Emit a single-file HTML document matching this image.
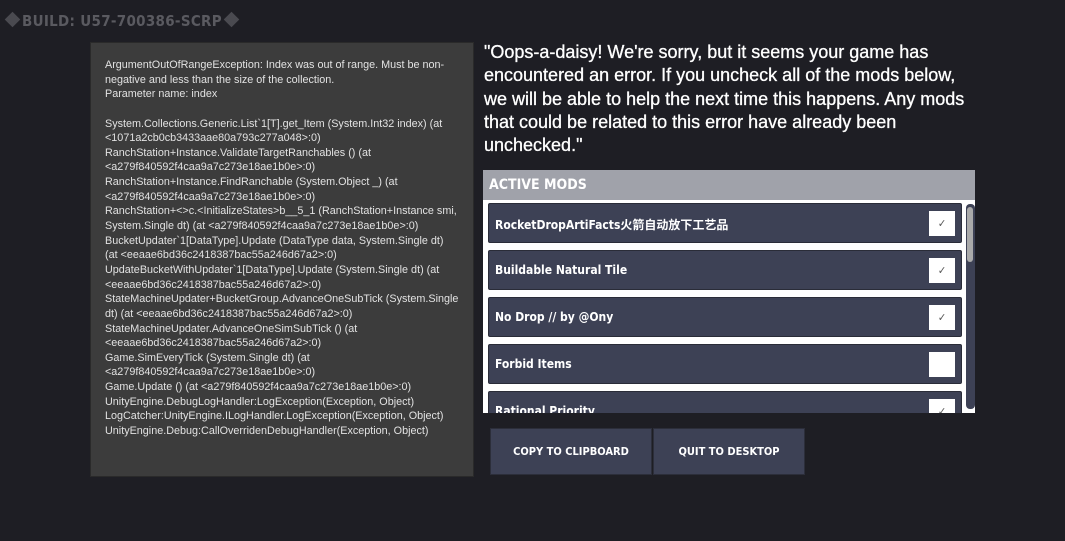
<!DOCTYPE html>
<html><head><meta charset="utf-8"><style>
*{margin:0;padding:0;box-sizing:border-box}
body{width:1065px;height:541px;background:#1e1e24;position:relative;overflow:hidden;font-family:"Liberation Sans","Noto Sans CJK SC",sans-serif}
.build{position:absolute;left:3px;top:12px;font-family:"DejaVu Sans Condensed","Liberation Sans",sans-serif;font-weight:bold;font-size:15px;color:#5a5a60;letter-spacing:0.3px}
.dia{display:inline-block;width:11px;height:11px;background:#4a4a50;transform:rotate(45deg);margin:0 4px;vertical-align:1px}
.log{position:absolute;left:90px;top:42px;width:384px;height:435px;background:#3c3c3c;border:1px solid #2a2a2a}
.log pre{position:absolute;left:14px;top:15px;font-family:"Liberation Sans",sans-serif;font-size:10.8px;line-height:14.64px;color:#e2e2e2;white-space:pre}
.msg{position:absolute;left:484px;top:41px;width:560px;font-size:18px;line-height:23.3px;color:#fff;-webkit-text-stroke:0.3px #fff;white-space:nowrap}
.mods{position:absolute;left:483px;top:170px;width:492px;height:243px;background:#fff;overflow:hidden}
.hdr{height:30px;background:#a0a2aa;color:#fff;font-family:"DejaVu Sans Condensed",sans-serif;font-weight:bold;font-size:14px;padding:7px 0 0 6px}
.row{position:absolute;left:5px;width:474px;height:40px;background:#3d4155;border:1px solid #2a2c38;border-radius:2px;color:#fff;font-family:"DejaVu Sans Condensed","Noto Sans CJK SC",sans-serif;font-weight:bold;font-size:12px;padding:12px 0 0 6px}
.cb{position:absolute;right:6px;top:7px;width:26px;height:25px;background:#fff;color:#555;font-size:11px;text-align:center;line-height:25px;font-weight:normal}
.sb{position:absolute;left:483px;top:34px;width:9px;height:205px;background:#3d4155;border-radius:4px}
.sb i{position:absolute;left:1px;top:3px;width:6px;height:55px;background:#aaa;border-radius:3px}
.btn{position:absolute;top:428px;height:47px;background:#3d4155;border:1px solid #2c2e3a;color:#fff;font-family:"DejaVu Sans Condensed",sans-serif;font-weight:bold;font-size:11px;text-align:center;line-height:46px}
</style></head><body>
<div class="build"><span class="dia"></span>BUILD: U57-700386-SCRP<span class="dia"></span></div>
<div class="log"><pre>ArgumentOutOfRangeException: Index was out of range. Must be non-
negative and less than the size of the collection.
Parameter name: index

System.Collections.Generic.List`1[T].get_Item (System.Int32 index) (at
&lt;1071a2cb0cb3433aae80a793c277a048&gt;:0)
RanchStation+Instance.ValidateTargetRanchables () (at
&lt;a279f840592f4caa9a7c273e18ae1b0e&gt;:0)
RanchStation+Instance.FindRanchable (System.Object _) (at
&lt;a279f840592f4caa9a7c273e18ae1b0e&gt;:0)
RanchStation+&lt;&gt;c.&lt;InitializeStates&gt;b__5_1 (RanchStation+Instance smi,
System.Single dt) (at &lt;a279f840592f4caa9a7c273e18ae1b0e&gt;:0)
BucketUpdater`1[DataType].Update (DataType data, System.Single dt)
(at &lt;eeaae6bd36c2418387bac55a246d67a2&gt;:0)
UpdateBucketWithUpdater`1[DataType].Update (System.Single dt) (at
&lt;eeaae6bd36c2418387bac55a246d67a2&gt;:0)
StateMachineUpdater+BucketGroup.AdvanceOneSubTick (System.Single
dt) (at &lt;eeaae6bd36c2418387bac55a246d67a2&gt;:0)
StateMachineUpdater.AdvanceOneSimSubTick () (at
&lt;eeaae6bd36c2418387bac55a246d67a2&gt;:0)
Game.SimEveryTick (System.Single dt) (at
&lt;a279f840592f4caa9a7c273e18ae1b0e&gt;:0)
Game.Update () (at &lt;a279f840592f4caa9a7c273e18ae1b0e&gt;:0)
UnityEngine.DebugLogHandler:LogException(Exception, Object)
LogCatcher:UnityEngine.ILogHandler.LogException(Exception, Object)
UnityEngine.Debug:CallOverridenDebugHandler(Exception, Object)</pre></div>
<div class="msg">"Oops-a-daisy! We're sorry, but it seems your game has<br>encountered an error. If you uncheck all of the mods below,<br>we will be able to help the next time this happens. Any mods<br>that could be related to this error have already been<br>unchecked."</div>
<div class="mods">
<div class="hdr">ACTIVE MODS</div>
<div class="row" style="top:33px">RocketDropArtiFacts火箭自动放下工艺品<div class="cb">✓</div></div>
<div class="row" style="top:80px">Buildable Natural Tile<div class="cb">✓</div></div>
<div class="row" style="top:127px">No Drop // by @Ony<div class="cb">✓</div></div>
<div class="row" style="top:174px">Forbid Items<div class="cb"></div></div>
<div class="row" style="top:221px">Rational Priority<div class="cb">✓</div></div>
<div class="sb"><i></i></div>
</div>
<div class="btn" style="left:490px;width:162px">COPY TO CLIPBOARD</div>
<div class="btn" style="left:653px;width:152px">QUIT TO DESKTOP</div>
</body></html>
